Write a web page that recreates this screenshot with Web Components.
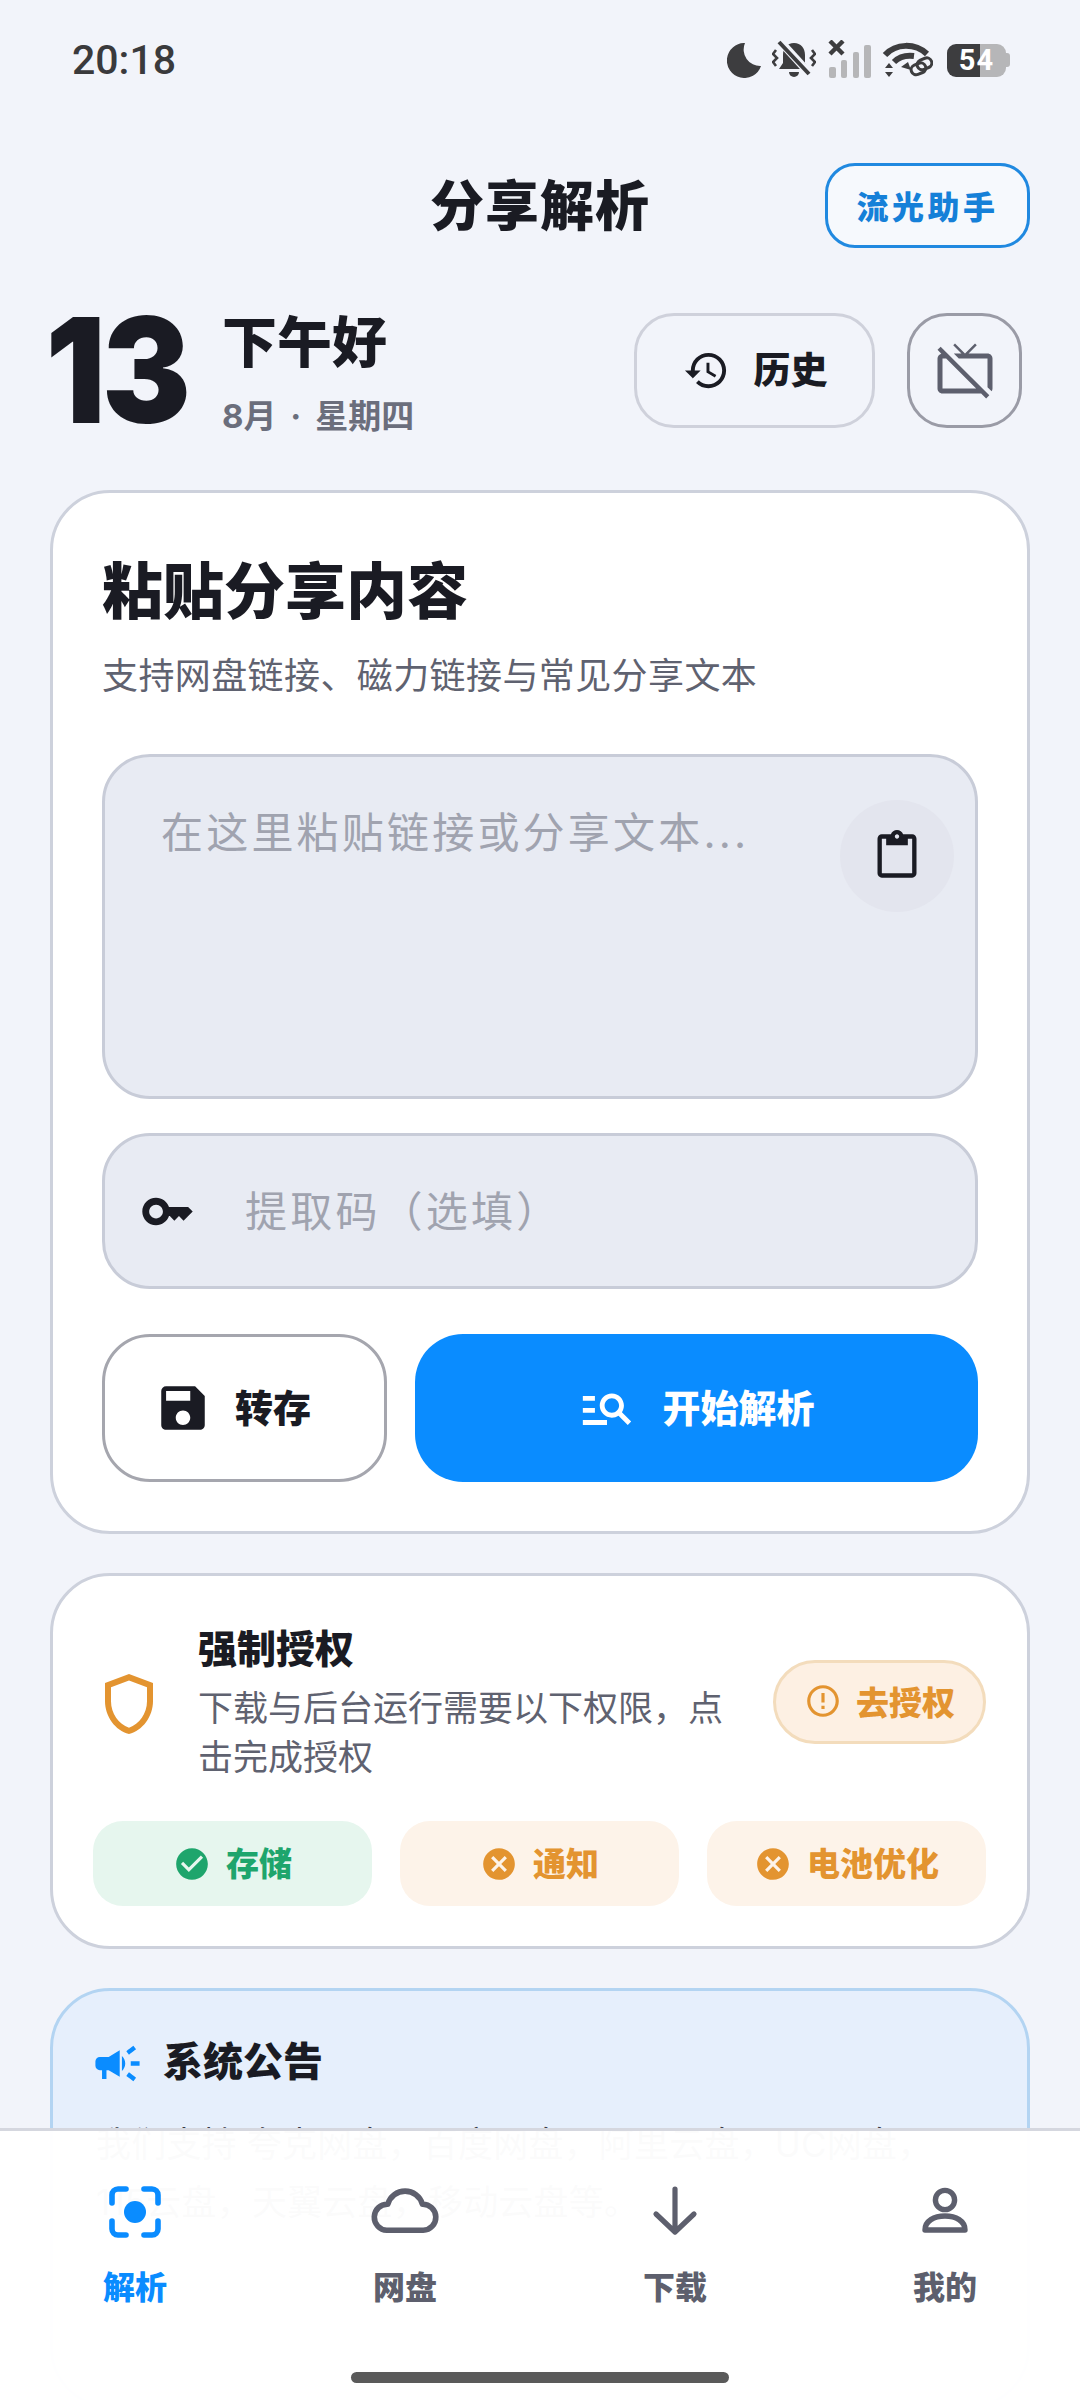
<!DOCTYPE html>
<html lang="zh-CN">
<head>
<meta charset="utf-8">
<title>分享解析</title>
<style>
  html, body { margin: 0; background: #f2f4fa; }
  body { font-family: Inter, "Noto Sans CJK SC", sans-serif; color: #1a1b23; }
</style>
</head>
<body>
<app-page>
  <status-bar></status-bar>
  <page-header></page-header>
  <greet-row></greet-row>
  <paste-card></paste-card>
  <perm-card></perm-card>
  <notice-card></notice-card>
  <bottom-nav>
    <nav-tab icon="scan" active>解析</nav-tab>
    <nav-tab icon="cloud">网盘</nav-tab>
    <nav-tab icon="down">下载</nav-tab>
    <nav-tab icon="person">我的</nav-tab>
  </bottom-nav>
</app-page>

<script>
// material style icons, all on a 24 box unless the entry says otherwise
var ICONS = {
  history: 'M13 3a9 9 0 0 0-9 9H1l3.89 3.89.07.14L9 12H6c0-3.87 3.13-7 7-7s7 3.13 7 7-3.13 7-7 7c-1.93 0-3.68-.79-4.94-2.06l-1.42 1.42A8.954 8.954 0 0 0 13 21a9 9 0 0 0 0-18zm-1 5v5l4.28 2.54.72-1.21-3.5-2.08V8H12z',
  tvoff: 'M1 3.54l1.53 1.53C1.65 5.28 1 6.06 1 7v12c0 1.1.9 2 2 2h15.46l2 2 1.26-1.27L2.27 2.27 1 3.54zM3 19V7h1.46l12 12H3zM21 5h-7.58l3.29-3.3L16 1l-4 4-4-4-.7.7L10.58 5H7.52l2 2H21v11.48l1.65 1.65c.22-.32.35-.71.35-1.13V7c0-1.11-.89-2-2-2z',
  paste: 'M19 2h-4.18C14.4.84 13.3 0 12 0c-1.3 0-2.4.84-2.82 2H5c-1.1 0-2 .9-2 2v16c0 1.1.9 2 2 2h14c1.1 0 2-.9 2-2V4c0-1.1-.9-2-2-2zm-7 0c.55 0 1 .45 1 1s-.45 1-1 1-1-.45-1-1 .45-1 1-1zm7 18H5V4h2v3h10V4h2v16z',
  key: 'M21 10h-8.35C11.83 7.67 9.61 6 7 6c-3.31 0-6 2.69-6 6s2.69 6 6 6c2.61 0 4.83-1.67 5.65-4H13l2 2 2-2 2 2 4-4.04L21 10zM7 15c-1.65 0-3-1.35-3-3s1.35-3 3-3 3 1.35 3 3-1.35 3-3 3z',
  save: 'M17 3H5a2 2 0 0 0-2 2v14c0 1.1.89 2 2 2h14c1.1 0 2-.9 2-2V7l-4-4zm-5 16c-1.66 0-3-1.34-3-3s1.34-3 3-3 3 1.34 3 3-1.34 3-3 3zm3-10H5V5h10v4z',
  search: 'M7 9H2V7h5v2zm0 3H2v2h5v-2zm13.59 7l-3.83-3.83c-.8.52-1.74.83-2.76.83-2.76 0-5-2.24-5-5s2.24-5 5-5 5 2.24 5 5c0 1.02-.31 1.96-.83 2.75L22 17.59 20.59 19zM17 11c0-1.65-1.35-3-3-3s-3 1.35-3 3 1.35 3 3 3 3-1.35 3-3zM2 19h10v-2H2v2z',
  shield: 'M12 2 4 5v6.09c0 5.05 3.41 9.76 8 10.91 4.59-1.15 8-5.86 8-10.91V5l-8-3zm6 9.09c0 4-2.55 7.7-6 8.83-3.45-1.13-6-4.82-6-8.83v-4.7l6-2.25 6 2.25v4.7z',
  alert: 'M11 15h2v2h-2zm0-8h2v6h-2zm.99-5C6.47 2 2 6.48 2 12s4.47 10 9.99 10C17.52 22 22 17.52 22 12S17.52 2 11.99 2zM12 20c-4.42 0-8-3.58-8-8s3.58-8 8-8 8 3.58 8 8-3.58 8-8 8z',
  ok: 'M12 2C6.48 2 2 6.48 2 12s4.48 10 10 10 10-4.48 10-10S17.52 2 12 2zm-2 15-5-5 1.41-1.41L10 14.17l7.59-7.59L19 8l-9 9z',
  no: 'M12 2C6.47 2 2 6.47 2 12s4.47 10 10 10 10-4.47 10-10S17.53 2 12 2zm5 13.59L15.59 17 12 13.41 8.41 17 7 15.59 10.59 12 7 8.41 8.41 7 12 10.59 15.59 7 17 8.41 13.41 12 17 15.59z',
  horn: 'M18 11v2h4v-2h-4zm-2 6.61c.96.71 2.21 1.65 3.2 2.39.4-.53.8-1.07 1.2-1.6-.99-.74-2.24-1.68-3.2-2.4-.4.54-.8 1.08-1.2 1.61zM20.4 5.6c-.4-.53-.8-1.07-1.2-1.6-.99.74-2.24 1.68-3.2 2.4.4.53.8 1.07 1.2 1.6.96-.72 2.21-1.65 3.2-2.4zM4 9c-1.1 0-2 .9-2 2v2c0 1.1.9 2 2 2h1v4h2v-4h1l5 3V6L8 9H4zm11.5 3c0-1.33-.58-2.53-1.5-3.35v6.69c.92-.81 1.5-2.01 1.5-3.34z'
};

class AppIcon extends HTMLElement {
  connectedCallback() {
    var size = this.getAttribute("size") || 48;
    this.attachShadow({mode: "open"}).innerHTML = `
      <style>:host { display: block; line-height: 0; flex: none; }</style>
      <svg width="${size}" height="${size}" viewBox="0 0 24 24" fill="currentColor"><path d="${ICONS[this.getAttribute("name")]}"/></svg>`;
  }
}
customElements.define("app-icon", AppIcon);

class AppPage extends HTMLElement {
  constructor() {
    super();
    this.attachShadow({mode: "open"}).innerHTML = `
      <style>
        :host { display: block; position: relative; height: 2400px; overflow: hidden; background: #f2f4fa; }
      </style>
      <slot></slot>`;
  }
}
customElements.define("app-page", AppPage);

class StatusBar extends HTMLElement {
  constructor() {
    super();
    this.attachShadow({mode: "open"}).innerHTML = `
      <style>
        :host { display: flex; height: 120px; padding: 0 70px 0 72px; align-items: center; justify-content: space-between; box-sizing: border-box; }
        .time { font: 500 41px Roboto, sans-serif; color: #3a3a3c; }
        .icons { display: flex; align-items: center; }
        svg { display: block; }
        .batt { display: flex; align-items: center; margin-left: 14px; }
        .cell { width: 59px; height: 33px; border-radius: 9px; background: linear-gradient(90deg, #3d3d3f 33px, #b6b6b8 33px);
                font: 700 29px/33px Roboto, sans-serif; color: #fff; text-align: center; letter-spacing: 1px; }
        .nub { width: 4px; height: 14px; background: #b6b6b8; border-radius: 0 3px 3px 0; }
      </style>
      <div class="time">20:18</div>
      <div class="icons">
        <svg width="34" height="35" viewBox="0 0 34 35"><path fill="#3d3d3f" d="M18 0A17.5 17.5 0 1 0 34 23A16.5 16.5 0 0 1 18 0Z"/></svg>
        <svg style="margin-left:11px" width="44" height="42" viewBox="0 0 44 42">
          <path fill="#3d3d3f" d="M22 4c7 0 11 5 11 12v8l4 6H7l4-6v-8C11 9 15 4 22 4Z"/>
          <path fill="#3d3d3f" d="M17 33h10a5 5 0 0 1-10 0Z"/>
          <path d="M7 1 37 34" stroke="#f2f4fa" stroke-width="8"/>
          <path d="M7 3 37 35" stroke="#3d3d3f" stroke-width="4"/>
          <path d="M4 11 1 15l4 4-4 4 3 4M40 11l3 4-4 4 4 4-3 4" fill="none" stroke="#3d3d3f" stroke-width="2.6"/>
        </svg>
        <svg style="margin-left:12px" width="43" height="40" viewBox="0 0 43 40">
          <g fill="#b6b6b8"><rect x="1" y="27" width="7" height="11" rx="2"/><rect x="13" y="20" width="6" height="18" rx="2"/><rect x="25" y="12" width="6" height="26" rx="2"/><rect x="36" y="5" width="7" height="33" rx="2"/></g>
          <path d="M2 1 15 14M15 1 2 14" stroke="#3d3d3f" stroke-width="4.4"/>
        </svg>
        <svg style="margin-left:11px" width="51" height="36" viewBox="0 0 51 36">
          <path d="M3 13C14 1 33 1 45 12" fill="none" stroke="#3d3d3f" stroke-width="6"/>
          <path d="M12 20c6-6 12-7 20-6" fill="none" stroke="#3d3d3f" stroke-width="6"/>
          <path fill="#3d3d3f" d="M19 25l7-5 3 8zM7 21l4 5H3zM7 35l4-5H3z"/>
          <g fill="none" stroke="#3d3d3f" stroke-width="3"><rect x="29" y="22" width="15" height="10" rx="5" transform="rotate(-22 36 27)"/><rect x="35" y="17" width="15" height="10" rx="5" transform="rotate(-22 42 22)"/></g>
        </svg>
        <div class="batt"><div class="cell">54</div><div class="nub"></div></div>
      </div>`;
  }
}
customElements.define("status-bar", StatusBar);

class PageHeader extends HTMLElement {
  constructor() {
    super();
    this.attachShadow({mode: "open"}).innerHTML = `
      <style>
        :host { display: grid; grid-template-columns: 1fr auto 1fr; align-items: center; margin: 43px 50px 0; height: 85px; }
        h1 { grid-column: 2; margin: 3px 0 0; font-size: 54px; font-weight: 900; line-height: 70px; letter-spacing: 1px; }
        .assist { grid-column: 3; justify-self: end; width: 205px; height: 85px; box-sizing: border-box; border: 3px solid #2089e0; border-radius: 30px; padding-bottom: 2px;
                  display: flex; align-items: center; justify-content: center; font-size: 32px; font-weight: 900; letter-spacing: 3.5px; color: #1580d8; background: #f6f9fd; }
      </style>
      <h1>分享解析</h1>
      <div class="assist">流光助手</div>`;
  }
}
customElements.define("page-header", PageHeader);

class GreetRow extends HTMLElement {
  constructor() {
    super();
    this.attachShadow({mode: "open"}).innerHTML = `
      <style>
        :host { display: flex; align-items: center; height: 115px; margin: 65px 58px 0 50px; }
        .day { font-size: 146px; font-weight: 900; line-height: 115px; letter-spacing: -4px; width: 177px; margin-left: -5px; transform: scaleX(.91); transform-origin: 5px 50%; }
        .hello { flex: 1; align-self: flex-start; margin-top: -6px; display: flex; flex-direction: column; }
        .hi { font-size: 55px; font-weight: 900; line-height: 70px; }
        .date { font-size: 33px; font-weight: 700; line-height: 44px; color: #6b6e7c; margin-top: 17px; word-spacing: 6px; }
        .btn { height: 115px; box-sizing: border-box; border-radius: 40px; border: 3px solid #cfd1db; display: flex; align-items: center; justify-content: center; }
        .hist { width: 241px; gap: 24px; font-size: 37px; font-weight: 900; padding: 0 0 5px 1px; }
        .hist app-icon { margin-top: 5px; }
        .tv { width: 115px; margin-left: 32px; border-color: #9a9ba6; color: #5d5f6d; }
      </style>
      <div class="day">13</div>
      <div class="hello"><div class="hi">下午好</div><div class="date">8月 · 星期四</div></div>
      <div class="btn hist"><app-icon name="history" size="47"></app-icon>历史</div>
      <div class="btn tv"><app-icon name="tvoff" size="60"></app-icon></div>`;
  }
}
customElements.define("greet-row", GreetRow);

class PasteCard extends HTMLElement {
  constructor() {
    super();
    this.attachShadow({mode: "open"}).innerHTML = `
      <style>
        :host { display: block; margin: 62px 50px 0; box-sizing: border-box; height: 1044px; padding: 59px 49px 0; background: #fff; border: 3px solid #cdd1dc; border-radius: 60px; }
        h2 { margin: 0; font-size: 61px; font-weight: 900; line-height: 80px; }
        .sub { margin-top: 19px; font-size: 36px; line-height: 50px; letter-spacing: .4px; color: #5f6270; }
        .area { margin-top: 53px; height: 345px; box-sizing: border-box; padding: 43px 21px 0 56px; border: 3px solid #c8ccd8; border-radius: 48px; background: #e8ebf3;
                display: flex; justify-content: space-between; align-items: flex-start; }
        .ph { font-size: 42px; line-height: 60px; letter-spacing: 3.2px; color: #a0a3af; padding-top: 3px; }
        .clip { width: 114px; height: 112px; border-radius: 50%; background: #e3e5ee; display: flex; align-items: center; justify-content: center; }
        .code { margin-top: 34px; height: 156px; box-sizing: border-box; padding-left: 35px; border: 3px solid #c8ccd8; border-radius: 48px; background: #e8ebf3;
                display: flex; align-items: center; gap: 50px; }
        .code .ph { padding-top: 1px; }
        .btns { margin-top: 45px; display: flex; gap: 28px; }
        .btn { height: 148px; box-sizing: border-box; border-radius: 48px; display: flex; align-items: center; justify-content: center; font-size: 38px; font-weight: 900; padding-bottom: 5px; }
        .btn app-icon { margin-top: 5px; }
        .save { width: 285px; gap: 23px; border: 3px solid #a5a6ae; background: #fff; padding-right: 24px; }
        .go { flex: 1; gap: 26px; background: #0a8cff; color: #fff; }
      </style>
      <h2>粘贴分享内容</h2>
      <div class="sub">支持网盘链接、磁力链接与常见分享文本</div>
      <div class="area">
        <div class="ph">在这里粘贴链接或分享文本...</div>
        <div class="clip"><app-icon name="paste" size="52"></app-icon></div>
      </div>
      <div class="code"><app-icon name="key" size="55"></app-icon><div class="ph">提取码（选填）</div></div>
      <div class="btns">
        <div class="btn save"><app-icon name="save" size="58"></app-icon>转存</div>
        <div class="btn go"><app-icon name="search" size="58"></app-icon>开始解析</div>
      </div>`;
  }
}
customElements.define("paste-card", PasteCard);

class PermChip extends HTMLElement {
  connectedCallback() {
    var ok = this.hasAttribute("ok");
    this.attachShadow({mode: "open"}).innerHTML = `
      <style>
        :host { display: flex; height: 85px; border-radius: 30px; align-items: center; justify-content: center; gap: 15px; font-size: 33px; font-weight: 900; padding-bottom: 4px; box-sizing: border-box;
                background: ${ok ? "#e6f6ee" : "#fdf3e9"}; color: ${ok ? "#1ea56c" : "#e39430"}; }
        app-icon { margin-top: 4px; }
      </style>
      <app-icon name="${ok ? "ok" : "no"}" size="38"></app-icon><slot></slot>`;
  }
}
customElements.define("perm-chip", PermChip);

class PermCard extends HTMLElement {
  constructor() {
    super();
    this.attachShadow({mode: "open"}).innerHTML = `
      <style>
        :host { display: block; margin: 39px 50px 0; box-sizing: border-box; height: 376px; padding: 49px 41px 0 40px; background: #fff; border: 3px solid #cdd1dc; border-radius: 60px; }
        .top { display: flex; align-items: center; }
        .shield { margin-right: 33px; color: #e39430; }
        .txt { flex: 1; }
        .name { font-size: 39px; font-weight: 900; line-height: 50px; margin-top: -1px; }
        .desc { margin-top: 10px; font-size: 35px; line-height: 49px; color: #5f6270; }
        .auth { margin: 0 0 3px 40px; width: 213px; height: 84px; box-sizing: border-box; border-radius: 42px; border: 3px solid #f3dcbc; background: #fdf0e3; color: #e39430; padding-bottom: 3px;
                display: flex; align-items: center; justify-content: center; gap: 14px; font-size: 33px; font-weight: 900; }
        .chips { margin-top: 39px; display: grid; grid-template-columns: repeat(3, 1fr); gap: 28px; }
      </style>
      <div class="top">
        <app-icon class="shield" name="shield" size="72"></app-icon>
        <div class="txt"><div class="name">强制授权</div><div class="desc">下载与后台运行需要以下权限，点击完成授权</div></div>
        <div class="auth"><app-icon name="alert" size="38"></app-icon>去授权</div>
      </div>
      <div class="chips">
        <perm-chip ok>存储</perm-chip>
        <perm-chip>通知</perm-chip>
        <perm-chip>电池优化</perm-chip>
      </div>`;
  }
}
customElements.define("perm-card", PermCard);

class NoticeCard extends HTMLElement {
  constructor() {
    super();
    this.attachShadow({mode: "open"}).innerHTML = `
      <style>
        :host { display: block; margin: 39px 50px 0; box-sizing: border-box; height: 420px; padding: 43px 42px 0 38px; background: #e6effc; border: 3px solid #b3d4f2; border-radius: 60px; }
        .head { display: flex; align-items: center; gap: 19px; font-size: 40px; font-weight: 900; line-height: 50px; }
        .head app-icon { color: #0a8cff; margin-top: 3px; }
        p { margin: 25px 0 0 5px; font-size: 35px; line-height: 58px; letter-spacing: .2px; color: #3a3c48; white-space: nowrap; }
      </style>
      <div class="head"><app-icon name="horn" size="53"></app-icon>系统公告</div>
      <p>我们支持 夸克网盘，百度网盘，阿里云盘，UC网盘，<br>115云盘，天翼云盘，移动云盘等。</p>`;
  }
}
customElements.define("notice-card", NoticeCard);

class NavTab extends HTMLElement {
  connectedCallback() {
    var art = {
      scan: '<path d="M3 17V9a6 6 0 0 1 6-6h8M35 3h8a6 6 0 0 1 6 6v8M49 35v8a6 6 0 0 1-6 6h-8M17 49H9a6 6 0 0 1-6-6v-8" fill="none" stroke="currentColor" stroke-width="5.6" stroke-linecap="round" transform="translate(8 6)"/><circle cx="34" cy="32" r="11" fill="currentColor"/>',
      cloud: '<path d="M15.8 50.2H52.2A13 13 0 1 0 51.4 24.2A18 18 0 0 0 16.8 24.2A13 13 0 1 0 15.8 50.2Z" fill="none" stroke="currentColor" stroke-width="5.6" stroke-linejoin="round"/>',
      down: '<path d="M34 9V51M15 34 34 52 53 34" fill="none" stroke="currentColor" stroke-width="5.2" stroke-linecap="round" stroke-linejoin="round"/>',
      person: '<circle cx="34" cy="20" r="9.6" fill="none" stroke="currentColor" stroke-width="5.4"/><path d="M14 50c0-9 9-14 20-14s20 5 20 14Z" fill="none" stroke="currentColor" stroke-width="5.4" stroke-linejoin="round"/>'
    }[this.getAttribute("icon")];
    this.attachShadow({mode: "open"}).innerHTML = `
      <style>
        :host { display: flex; flex-direction: column; align-items: center; font-size: 32px; font-weight: 900; line-height: 44px; color: ${this.hasAttribute("active") ? "#0a8cff" : "#5d5f6d"}; }
        svg { display: block; margin-bottom: 22px; }
      </style>
      <svg width="68" height="64" viewBox="0 0 68 64">${art}</svg><slot></slot>`;
  }
}
customElements.define("nav-tab", NavTab);

class BottomNav extends HTMLElement {
  constructor() {
    super();
    this.attachShadow({mode: "open"}).innerHTML = `
      <style>
        :host { position: absolute; left: 0; right: 0; bottom: 0; height: 272px; box-sizing: border-box; border-top: 3px solid #d5d7df; background: rgba(255,255,255,.98); padding-top: 49px; }
        .tabs { display: grid; grid-template-columns: repeat(4, 1fr); }
        .home { position: absolute; left: 351px; bottom: 17px; width: 378px; height: 11px; border-radius: 6px; background: #5a5a5a; }
      </style>
      <div class="tabs"><slot></slot></div>
      <div class="home"></div>`;
  }
}
customElements.define("bottom-nav", BottomNav);
</script>
</body>
</html>
